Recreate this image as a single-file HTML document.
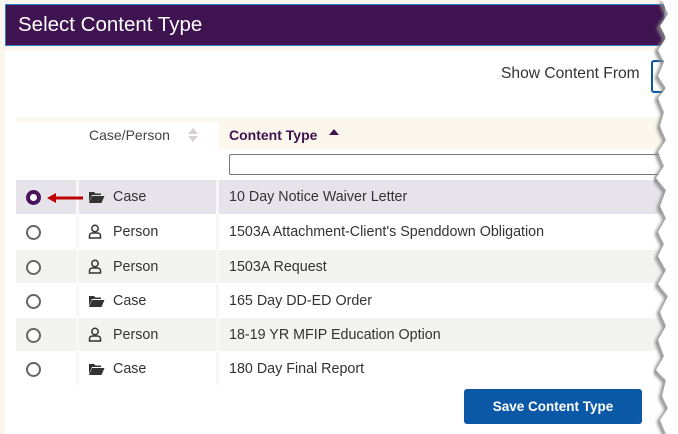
<!DOCTYPE html>
<html><head><style>
*{margin:0;padding:0;box-sizing:border-box}
body{width:678px;height:434px;background:#fff;position:relative;overflow:hidden;font-family:"Liberation Sans",sans-serif;color:#333}
.cream{position:absolute;left:0;top:0;width:678px;height:50px;background:#fbf5ee}
.lstrip{position:absolute;left:0;top:0;width:5px;height:434px;background:#fbf5ee}
.hdr{position:absolute;left:5px;top:4px;width:660px;height:42px;background:#3f1350;border:1px solid #2a7fd0;color:#fff;font-size:20.5px;line-height:40px;padding-left:12px}
.abs{position:absolute}
.cell{position:absolute;font-size:14.3px;line-height:34px}
.radio{position:absolute;left:26px;width:15px;height:15px;border:2px solid #666;border-radius:50%;background:#fff}
</style></head><body>
<div class="cream"></div><div class="lstrip"></div>
<div class="hdr">Select Content Type</div>
<div class="abs" style="left:501px;top:65px;font-size:15.6px;color:#333">Show Content From</div>
<div class="abs" style="left:651px;top:60px;width:20px;height:33px;border:2px solid #0a56a4;border-radius:3px"></div>
<div class="abs" style="left:16px;top:117px;width:650px;height:32px;background:#fbf7ec"></div>
<div class="abs" style="left:16px;top:122px;width:203px;height:28px;background:#fff"></div>
<div class="abs" style="left:89px;top:127px;font-size:14px;color:#444">Case/Person</div>
<svg class="abs" style="left:187px;top:127px" width="12" height="16"><path d="M1 7L6 1L11 7Z M1 9L6 15L11 9Z" fill="#d8d0d0"/></svg>
<div class="abs" style="left:229px;top:127px;font-size:14px;font-weight:bold;color:#3f1350">Content Type</div>
<svg class="abs" style="left:328px;top:128px" width="12" height="8"><path d="M1 7L6 1L11 7Z" fill="#3f1350"/></svg>
<div class="abs" style="left:229px;top:154px;width:440px;height:21px;border:1px solid #777;border-radius:2px;background:#fff"></div>
<div id="rows"></div>
<script>
var rows=[["Case","10 Day Notice Waiver Letter"],["Person","1503A Attachment-Client's Spenddown Obligation"],["Person","1503A Request"],["Case","165 Day DD-ED Order"],["Person","18-19 YR MFIP Education Option"],["Case","180 Day Final Report"]];
var tops=[180,215,250,284,318,352],h='';
var folder='<svg width="17" height="13" viewBox="0 0 17 13"><path d="M1 1h5l1.5 1.5H13V4H4L1 11Z" fill="#333"/><path d="M4 5h12.5l-3 7H1Z" fill="#333"/></svg>';
var person='<svg width="14" height="15" viewBox="0 0 14 15"><circle cx="7" cy="4.5" r="3.2" fill="none" stroke="#333" stroke-width="1.5"/><path d="M1.5 14v-2.5c0-1.5 1.5-2.5 3-2.5h5c1.5 0 3 1 3 2.5V14Z" fill="none" stroke="#333" stroke-width="1.5"/></svg>';
rows.forEach(function(r,i){
 var t=tops[i],bg=i==0?'#e7e3ea':(i%2==0?'#f3f3f2':'#fff');
 var hh=(i==5?34:tops[i+1]-t)-1;
 h+='<div class="abs" style="left:16px;top:'+t+'px;width:650px;height:'+hh+'px;background:#f7f7f7"></div>';
 h+='<div class="abs" style="left:16px;top:'+t+'px;width:60px;height:'+hh+'px;background:'+bg+'"></div>';
 h+='<div class="abs" style="left:79px;top:'+t+'px;width:137px;height:'+hh+'px;background:'+bg+'"></div>';
 h+='<div class="abs" style="left:219px;top:'+t+'px;width:447px;height:'+hh+'px;background:'+bg+'"></div>';
 if(i==0){h+='<div class="radio" style="top:'+(t+10)+'px;border:4.5px solid #4a145c;background:#fff"></div>';
  h+='<svg class="abs" style="left:47px;top:'+(t+13)+'px" width="37" height="10"><path d="M0 5L9 0V3.5H36V6.5H9V10Z" fill="#c00000"/></svg>';}
 else h+='<div class="radio" style="top:'+(t+10)+'px"></div>';
 h+='<div class="abs" style="left:88px;top:'+(t+(r[0]=="Case"?11:9))+'px">'+(r[0]=="Case"?folder:person)+'</div>';
 h+='<div class="cell" style="left:113px;top:'+t+'px">'+r[0]+'</div>';
 h+='<div class="cell" style="left:229px;top:'+t+'px">'+r[1]+'</div>';
});
document.getElementById('rows').innerHTML=h;
</script>
<div class="abs" style="left:464px;top:389px;width:178px;height:35px;background:#0b58a7;border-radius:3px;color:#fff;font-size:13.5px;font-weight:bold;text-align:center;line-height:35px">Save Content Type</div>
<svg class="abs" style="left:640px;top:0" width="38" height="434"><defs><filter id="b"><feGaussianBlur stdDeviation="1.5"/></filter></defs><path d="M18 0L24 14 16 26 22 38 14 50 20 62 14 76 22 88 14 98 20 112 16 126 22 140 14 152 20 166 12 178 22 190 16 206 22 218 14 232 20 244 14 256 22 270 14 284 24 296 16 312 22 326 14 340 20 356 12 370 22 380 18 396 24 408 16 420 22 434" fill="none" stroke="#888" stroke-width="4" filter="url(#b)" transform="translate(3,2)"/><path d="M38 0V434H22L16 420 24 408 18 396 22 380 12 370 20 356 14 340 22 326 16 312 24 296 14 284 22 270 14 256 20 244 14 232 22 218 16 206 22 190 12 178 20 166 14 152 22 140 16 126 20 112 14 98 22 88 14 76 20 62 14 50 22 38 16 26 24 14 18 0Z" fill="#fff" transform="translate(4,0)"/></svg>
</body></html>
